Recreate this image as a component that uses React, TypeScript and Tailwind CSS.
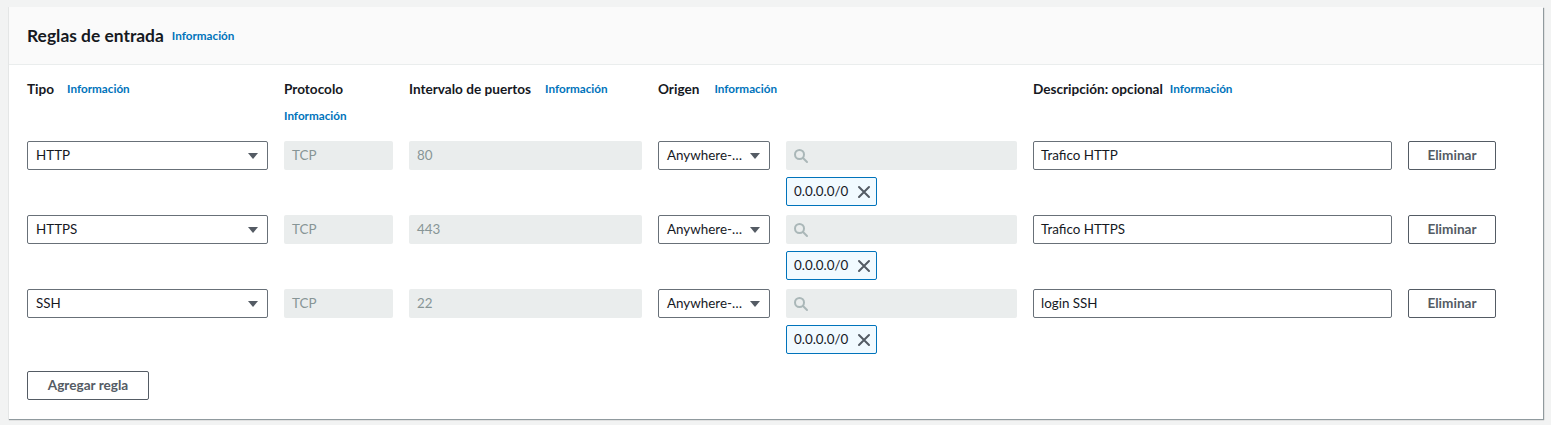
import React from "react";

const Caret = () => (
  <svg width="12" height="8" viewBox="0 0 12 8" className="shrink-0">
    <path d="M1 1h10L6 7z" fill="#545b64" />
  </svg>
);

const Search = () => (
  <svg width="16" height="16" viewBox="0 0 16 16" fill="none" stroke="#aab7b8" strokeWidth="2" strokeLinecap="round">
    <circle cx="6.5" cy="6.5" r="4.5" />
    <path d="M10 10l4 4" />
  </svg>
);

const XIcon = () => (
  <svg width="14" height="14" viewBox="0 0 14 14" fill="none" stroke="#545b64" strokeWidth="2" strokeLinecap="round">
    <path d="M2 2l10 10M12 2L2 12" />
  </svg>
);

const Info = () => <span className="text-[11.7px] font-bold text-[#0073bb]">Información</span>;

const rows = [
  { tipo: "HTTP", port: "80", desc: "Trafico HTTP" },
  { tipo: "HTTPS", port: "443", desc: "Trafico HTTPS" },
  { tipo: "SSH", port: "22", desc: "login SSH" },
];

export default function App() {
  return (
    <div
      className="min-h-[425px] bg-[#f2f3f3] pt-[7px] pl-[8px] pr-[8px] pb-[6px]"
      style={{ fontFamily: 'Lato, "Noto Sans", Arial, sans-serif' }}
    >
      <div className="bg-white border-l border-[#e4e6e6] shadow-[1px_1px_1px_0_rgba(0,28,36,0.3),1px_1px_1px_0_rgba(0,28,36,0.15)]">
        <div className="h-[58px] bg-[#fafafa] border-b border-[#eaeded] flex items-center pl-[18px] gap-[8px]">
          <span className="text-[17.4px] font-bold text-[#16191f] leading-none">Reglas de entrada</span>
          <Info />
        </div>
        <div className="pl-[18px] pt-[14px] pb-[19px]">
          <div className="grid grid-cols-[241px_109px_233px_112px_231px_359px_88px] gap-x-[16px] text-[#16191f]">
            <div className="flex items-center gap-[13px] h-[20px]">
              <span className="text-[13.6px] font-bold">Tipo</span>
              <Info />
            </div>
            <div className="flex flex-col">
              <span className="text-[13.6px] font-bold h-[20px] leading-[20px]">Protocolo</span>
              <span className="mt-[7px] leading-[16px]"><Info /></span>
            </div>
            <div className="flex items-center gap-[14px] h-[20px]">
              <span className="text-[13.6px] font-bold">Intervalo de puertos</span>
              <Info />
            </div>
            <div className="flex items-center gap-[15px] h-[20px] col-span-2">
              <span className="text-[13.6px] font-bold">Origen</span>
              <Info />
            </div>
            <div className="flex items-center gap-[7px] h-[20px] col-span-2">
              <span className="text-[13.6px] font-bold">Descripción: opcional</span>
              <Info />
            </div>
          </div>
          <div className="mt-[18px] flex flex-col gap-[9px]">
            {rows.map((r) => (
              <div
                key={r.tipo}
                className="grid grid-cols-[241px_109px_233px_112px_231px_359px_88px] gap-x-[16px] text-[13.4px] text-[#16191f]"
              >
                <div className="h-[29px] border border-[#687078] rounded-[2px] flex items-center justify-between pl-[8px] pr-[8px]">
                  <span>{r.tipo}</span>
                  <Caret />
                </div>
                <div className="h-[29px] bg-[#eaeded] rounded-[2px] flex items-center pl-[8px] text-[#879596]">TCP</div>
                <div className="h-[29px] bg-[#eaeded] rounded-[2px] flex items-center pl-[8px] text-[#879596]">{r.port}</div>
                <div className="h-[29px] border border-[#687078] rounded-[2px] flex items-center justify-between pl-[8px] pr-[8px]">
                  <span className="whitespace-nowrap">Anywhere-…</span>
                  <Caret />
                </div>
                <div className="flex flex-col gap-[7px]">
                  <div className="h-[29px] bg-[#eaeded] rounded-[2px] flex items-center pl-[7px]">
                    <Search />
                  </div>
                  <div className="h-[29px] w-[91px] border border-[#0073bb] bg-[#f1faff] rounded-[2px] flex items-center pl-[7px] gap-[9px]">
                    <span>0.0.0.0/0</span>
                    <XIcon />
                  </div>
                </div>
                <div className="h-[29px] border border-[#687078] rounded-[2px] flex items-center pl-[7px]">{r.desc}</div>
                <div className="h-[29px] border border-[#545b64] rounded-[2px] flex items-center justify-center font-bold text-[13.6px] text-[#545b64]">
                  Eliminar
                </div>
              </div>
            ))}
          </div>
          <div className="mt-[17px] w-[122px] h-[29px] border border-[#545b64] rounded-[2px] flex items-center justify-center text-[13.6px] font-bold text-[#545b64]">
            Agregar regla
          </div>
        </div>
      </div>
    </div>
  );
}
